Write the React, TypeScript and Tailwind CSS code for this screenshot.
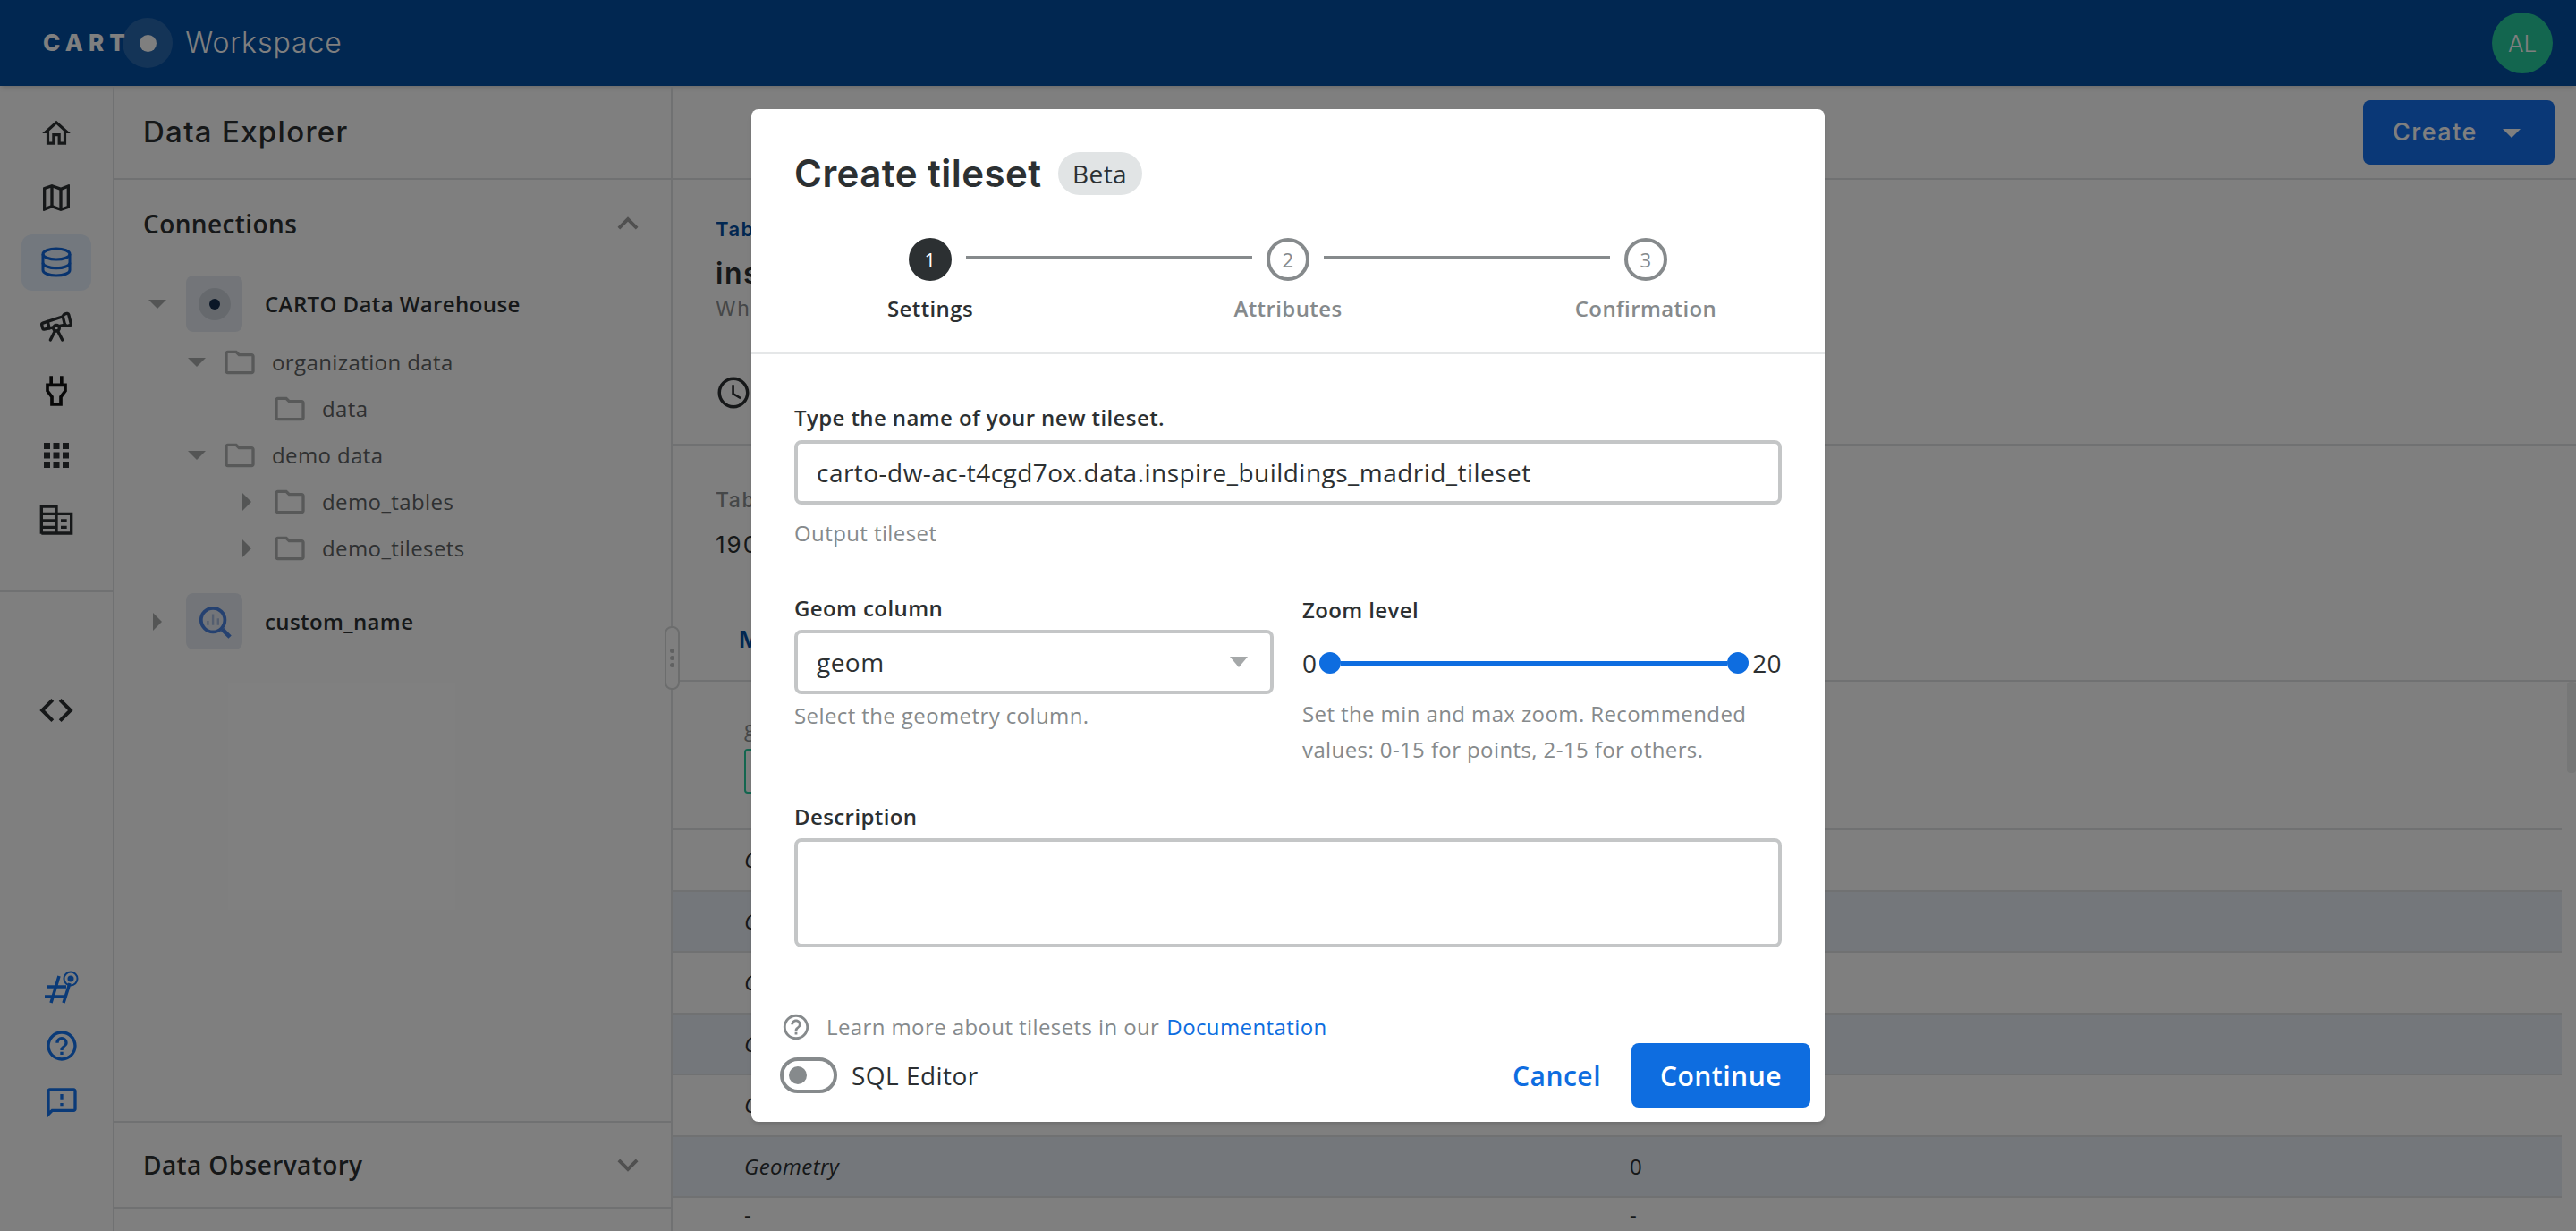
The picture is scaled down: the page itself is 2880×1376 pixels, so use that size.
import React from "react";
import { Telescope } from "lucide-react";
import {
  MdApps,
  MdExpandLess,
  MdExpandMore,
  MdHelpOutline,
  MdOutlineAccessTime,
  MdOutlineFeedback,
  MdOutlineFolder,
  MdOutlineHome,
  MdOutlineMap,
} from "react-icons/md";

const sans = "font-['Open_Sans',sans-serif] tracking-[0.4px]";
const display = "font-['Inter',sans-serif]";

const Caret = ({ open, className = "" }: { open: boolean; className?: string }) => (
  <svg viewBox="0 0 20 20" className={`h-5 w-5 shrink-0 fill-current ${className}`}>
    {open ? <path d="M0 5h20L10 15z" /> : <path d="M5 0l10 10L5 20z" />}
  </svg>
);

const DatabaseIcon = () => (
  <svg viewBox="0 0 24 24" className="h-9 w-9 fill-none stroke-[#1066dc] stroke-2">
    <ellipse cx="12" cy="6" rx="10" ry="4" />
    <path d="M2 6v12c0 2.200 4.500 4 10 4s10-1.800 10-4V6" />
    <path d="M2 12.500c0 2.200 4.500 4 10 4s10-1.800 10-4" />
  </svg>
);

const PlugIcon = () => (
  <svg viewBox="0 0 24 24" className="h-10 w-10 fill-none stroke-[#111] stroke-[2.200]">
    <path d="M8.500 2v6M15.500 2v6M6 8h12v4l-3 4v5H9v-5l-3-4z" />
  </svg>
);

const BuildingIcon = () => (
  <svg viewBox="0 0 24 24" className="h-10 w-10 fill-none stroke-[#2c3032] stroke-2">
    <path d="M2 21.500V3h10v18.500M12 8h10v13H2M2 8h10M2 12.500h10M2 17h10M15 12.500h4M15 17h4" />
  </svg>
);

const CodeIcon = () => (
  <svg viewBox="0 0 24 24" className="h-10 w-10 fill-none stroke-[#2c3032] stroke-[2.400]">
    <path d="M9.500 5l-7 7 7 7M14.500 5l7 7-7 7" />
  </svg>
);

const HashIcon = () => (
  <svg viewBox="0 0 40 40" className="h-10 w-10 fill-none stroke-[#1474f0]">
    <path strokeWidth="3.500" d="M17 6L8 36M29 14l-7 22M3 18h22M1 29h22" />
    <circle cx="30" cy="9" r="7.500" strokeWidth="2" />
    <circle cx="30" cy="9" r="3.500" className="fill-[#1474f0] stroke-none" />
  </svg>
);

const railIcons = [
  <MdOutlineHome size={38} className="text-[#2c3032]" />,
  <MdOutlineMap size={40} className="text-[#2c3032]" />,
  <DatabaseIcon />,
  <Telescope size={40} className="text-[#2c3032]" strokeWidth={2} />,
  <PlugIcon />,
  <MdApps size={42} className="text-[#2c3032]" />,
  <BuildingIcon />,
];

const Rail = () => (
  <aside className="flex h-full w-[128px] shrink-0 flex-col border-r-2 border-[#e1e3e4]">
    <div className="flex flex-col items-center pt-[17px]">
      {railIcons.map((icon, i) => (
        <div key={i} className="flex h-[72px] w-full items-center justify-center">
          <div className={`flex h-[63px] w-[78px] items-center justify-center rounded-xl ${i === 2 ? "bg-[#e7f0fc]" : ""}`}>
            {icon}
          </div>
        </div>
      ))}
    </div>
    <div className="mt-[43px] h-[2px] w-full bg-[#e1e3e4]" />
    <div className="mt-[112px] flex justify-center">
      <CodeIcon />
    </div>
    <div className="mt-auto flex flex-col items-center gap-[24px] pb-[123px] pl-[11px] text-[#1474f0]">
      <HashIcon />
      <MdHelpOutline size={40} />
      <MdOutlineFeedback size={40} />
    </div>
  </aside>
);

const TreeRow = ({ label, caret, indent }: { label: string; caret?: "open" | "closed"; indent: number }) => (
  <div className={`flex h-[52px] items-center ${indent === 1 ? "pl-[82px]" : "pl-[138px]"}`}>
    {caret ? <Caret open={caret === "open"} className="text-[#a8aaab]" /> : <span className="w-5 shrink-0" />}
    <MdOutlineFolder size={40} className="ml-[18px] shrink-0 text-[#b0b2b3]" />
    <span className="ml-4 text-[24px] text-[#5e6264]">{label}</span>
  </div>
);

const ConnectionRow = ({ label, open, children }: { label: string; open: boolean; children: React.ReactNode }) => (
  <div className="flex h-[63px] items-center pl-[38px]">
    <Caret open={open} className="text-[#a8aaab]" />
    <div className="ml-[22px] flex h-[63px] w-[63px] items-center justify-center rounded-lg bg-[#e6ebf2]">{children}</div>
    <span className="ml-[25px] text-[24px] font-semibold text-[#2c3032]">{label}</span>
  </div>
);

const Panel = () => (
  <section className={`flex h-full w-[624px] shrink-0 flex-col border-r-2 border-[#e1e3e4] ${sans}`}>
    <div className="flex h-[105px] shrink-0 items-center border-b-2 border-[#e1e3e4] pl-[32px]">
      <h2 className={`text-[33px] font-medium tracking-[1.300px] text-[#2c3032] ${display}`}>Data Explorer</h2>
    </div>
    <div className="flex h-[98px] shrink-0 items-center justify-between pl-[32px] pr-[25px]">
      <span className="text-[28px] font-semibold text-[#2c3032]">Connections</span>
      <MdExpandLess size={46} className="text-[#a0a0a0]" />
    </div>
    <div className="pt-[9px]">
      <ConnectionRow label="CARTO Data Warehouse" open>
        <span className="flex h-9 w-9 items-center justify-center rounded-full bg-[#cdd3db]">
          <span className="h-3 w-3 rounded-full bg-[#162f4f]" />
        </span>
      </ConnectionRow>
      <div className="mt-[8px]">
        <TreeRow indent={1} caret="open" label="organization data" />
        <TreeRow indent={2} label="data" />
        <TreeRow indent={1} caret="open" label="demo data" />
        <TreeRow indent={2} caret="closed" label="demo_tables" />
        <TreeRow indent={2} caret="closed" label="demo_tilesets" />
      </div>
      <div className="mt-[24px]">
        <ConnectionRow label="custom_name" open={false}>
          <svg viewBox="0 0 40 40" className="h-[38px] w-[38px] fill-none stroke-[#4b83e0]">
            <circle cx="18" cy="18" r="14" strokeWidth="4" />
            <path strokeWidth="5" d="M29 29l9 9" />
            <path strokeWidth="2.500" className="stroke-[#a9bddf]" d="M12 24v-5M18 24V11M24 24v-8" />
          </svg>
        </ConnectionRow>
      </div>
    </div>
    <div className="mb-[25px] mt-auto flex h-[98px] shrink-0 items-center justify-between border-y-2 border-[#e1e3e4] pl-[32px] pr-[25px]">
      <span className="text-[28px] font-semibold text-[#2c3032]">Data Observatory</span>
      <MdExpandMore size={46} className="text-[#a0a0a0]" />
    </div>
  </section>
);

const tableRows = [
  { name: "C", value: "", tint: false },
  { name: "C", value: "", tint: true },
  { name: "C", value: "", tint: false },
  { name: "C", value: "", tint: true },
  { name: "C", value: "", tint: false },
  { name: "Geometry", value: "0", tint: true },
];

const Main = () => (
  <main className={`flex h-full min-w-0 flex-1 flex-col ${sans}`}>
    <div className="flex h-[105px] shrink-0 items-center justify-end border-b-2 border-[#e1e3e4] pr-[24px]">
      <button className="flex h-[72px] w-[214px] items-center rounded-lg bg-[#1470ee] pl-[33px] pt-[2px] text-white">
        <span className={`text-[27px] font-medium tracking-[1.500px] ${display}`}>Create</span>
        <svg viewBox="0 0 20 10" className="ml-[28px] h-[10px] w-5 fill-current">
          <path d="M0 0h20L10 10z" />
        </svg>
      </button>
    </div>
    <div className="h-[297px] shrink-0 border-b-2 border-[#e1e3e4] pl-[48px] pt-[40px]">
      <p className={`text-[22px] font-semibold leading-[30px] tracking-[1.500px] text-[#034ea2] ${display}`}>Tab</p>
      <p className={`mt-[13px] text-[32px] font-semibold leading-[44px] tracking-[1.500px] text-[#2c3032] ${display}`}>ins</p>
      <p className={`mt-[2px] text-[23px] leading-[30px] tracking-[1.500px] text-[#8a8e90] ${display}`}>Wh</p>
      <MdOutlineAccessTime size={42} className="-ml-[1px] mt-[58px] text-[#2c3032]" />
    </div>
    <div className="h-[264px] shrink-0 border-b-2 border-[#e1e3e4] pl-[48px] pt-[46px]">
      <p className={`text-[23px] font-medium leading-[30px] tracking-[1.500px] text-[#8a8e90] ${display}`}>Tab</p>
      <p className={`mt-[17px] text-[26px] leading-[36px] tracking-[2px] text-[#2c3032] ${display}`}>190</p>
      <p className={`ml-[26px] mt-[70px] text-[26px] font-semibold leading-[36px] text-[#034ea2] ${display}`}>M</p>
    </div>
    <div className="relative min-h-0 flex-1">
      <div className="absolute right-0 top-0 h-[102px] w-[10px] rounded-sm bg-[#eceeee]" />
      <div className="mr-[16px] h-[166px] border-b-2 border-[#e1e3e4] pl-[80px] pt-[36px]">
        <p className="text-[24px] leading-[32px] text-[#8a8e90]">g</p>
        <div className="mt-[7px] h-[50px] w-[40px] rounded border-2 border-[#26cc9e]" />
      </div>
      <div className="mr-[16px]">
        {tableRows.map((row, i) => (
          <div
            key={i}
            className={`flex h-[68.500px] items-center border-b-2 border-[#e1e3e4] pl-[80px] text-[24px] italic text-[#2c3032] ${row.tint ? "bg-[#e8eef7]" : ""}`}
          >
            <span className="w-[990px]">{row.name}</span>
            <span className="not-italic">{row.value}</span>
          </div>
        ))}
        <div className="flex h-[38px] items-center pl-[80px] text-[24px] text-[#2c3032]">
          <span className="w-[990px]">-</span>
          <span>-</span>
        </div>
      </div>
    </div>
  </main>
);

const Step = ({ n, active }: { n: number; active?: boolean }) => (
  <span
    className={`flex h-12 w-12 shrink-0 items-center justify-center rounded-full text-[22px] ${
      active ? "bg-[#2c3032] text-white" : "border-4 border-[#868a8c] text-[#868a8c]"
    }`}
  >
    {n}
  </span>
);

const Connector = () => <span className="mx-4 -mt-1 h-1 w-[320px] bg-[#868a8c]" />;

const Field = ({ className, children }: { className: string; children?: React.ReactNode }) => (
  <div className={`flex items-center rounded-lg border-4 border-[#c4c6c7] pl-[21px] text-[28px] tracking-[0.47px] text-[#2c3032] ${className}`}>
    {children}
  </div>
);

const labelClass = "block text-[24px] font-semibold leading-8 text-[#2c3032]";

const Dialog = () => (
  <div className={`flex h-[1132px] w-[1200px] flex-col rounded-lg bg-white shadow-md ${sans}`}>
    <div className="flex items-center gap-[18px] pl-[48px] pt-[48px]">
      <h1 className={`text-[42px] font-semibold leading-[48px] tracking-[0.45px] text-[#2c3032] ${display}`}>Create tileset</h1>
      <span className="flex h-12 w-[94px] items-center justify-center rounded-full bg-[#e1e4e5] text-[28px] text-[#2c3032]">Beta</span>
    </div>
    <div className="mt-[48px] flex items-center justify-center">
      <Step n={1} active />
      <Connector />
      <Step n={2} />
      <Connector />
      <Step n={3} />
    </div>
    <div className="mt-[15px] grid grid-cols-3 text-center text-[24px] font-semibold leading-8 text-[#868a8c]">
      <span className="text-[#2c3032]">Settings</span>
      <span>Attributes</span>
      <span>Confirmation</span>
    </div>
    <div className="mt-[33px] h-[2px] w-full bg-[#e5e7e8]" />

    <div className="px-[48px] pt-[55px]">
      <label className={labelClass}>Type the name of your new tileset.</label>
      <Field className="mt-[9px] h-[72px]">carto-dw-ac-t4cgd7ox.data.inspire_buildings_madrid_tileset</Field>
      <p className="mt-4 text-[24px] leading-8 text-[#868a8c]">Output tileset</p>

      <div className="mt-[52px] grid grid-cols-2 gap-8">
        <div>
          <label className={labelClass}>Geom column</label>
          <Field className="mt-2 h-[72px] justify-between pr-[25px]">
            geom
            <svg viewBox="0 0 20 12" className="h-3 w-5 fill-[#a5a8a9]">
              <path d="M0 0h20L10 12z" />
            </svg>
          </Field>
          <p className="mt-2 text-[24px] leading-8 text-[#868a8c]">Select the geometry column.</p>
        </div>
        <div>
          <label className={`mt-[2px] ${labelClass}`}>Zoom level</label>
          <div className="mt-[7px] flex h-[72px] items-center text-[28px] text-[#2c3032]">
            <span>0</span>
            <span className="ml-[3px] h-6 w-6 shrink-0 rounded-full bg-[#0e6de0]" />
            <span className="h-[5px] flex-1 bg-[#0e6de0]" />
            <span className="h-6 w-6 shrink-0 rounded-full bg-[#0e6de0]" />
            <span className="ml-[4px]">20</span>
          </div>
          <p className="mt-[1px] text-[24px] leading-10 text-[#868a8c]">Set the min and max zoom. Recommended values: 0-15 for points, 2-15 for others.</p>
        </div>
      </div>

      <label className={`mt-[39px] ${labelClass}`}>Description</label>
      <Field className="mt-2 h-[122px]" />
    </div>

    <div className="mt-auto pb-4 pl-[32px] pr-4">
      <div className="flex h-8 items-center pl-[1px] text-[24px] text-[#868a8c]">
        <MdHelpOutline size={34} className="shrink-0" />
        <span className="ml-[17px]">Learn more about tilesets in our</span>
        <span className="ml-[8px] text-[#0e6de0]">Documentation</span>
      </div>
      <div className="mt-[2px] flex h-[72px] items-center justify-between">
        <div className="flex items-center">
          <span className="flex h-10 w-16 items-center rounded-full border-4 border-[#868a8c] pl-[6px]">
            <span className="h-5 w-5 rounded-full bg-[#868a8c]" />
          </span>
          <span className="ml-4 text-[28px] tracking-[0.47px] text-[#2c3032]">SQL Editor</span>
        </div>
        <div className="flex items-center gap-[34px]">
          <button className="text-[30px] font-semibold tracking-[0.5px] text-[#0e6de0]">Cancel</button>
          <button className="h-[72px] w-[200px] rounded-lg bg-[#0e6de0] text-[30px] font-semibold tracking-[0.5px] text-white">Continue</button>
        </div>
      </div>
    </div>
  </div>
);

export default function App() {
  return (
    <div className="relative h-[1376px] w-[2880px] overflow-hidden bg-white">
      <header className="flex h-[96px] items-center justify-between bg-[#034ea2] pl-[48px] pr-[26px] text-white shadow-md">
        <div className="flex items-center">
          <span className={`text-[26px] font-extrabold leading-none tracking-[6.200px] ${display}`}>CART</span>
          <span className="-ml-[9px] flex h-[56px] w-[56px] items-center justify-center rounded-full bg-white/15">
            <span className="h-[19px] w-[19px] rounded-full bg-white" />
          </span>
          <span className={`ml-[14px] text-[32px] font-light tracking-[0.95px] ${display}`}>Workspace</span>
        </div>
        <span className={`flex h-[68px] w-[68px] items-center justify-center rounded-full bg-[#26cc9e] text-[26px] font-light ${display}`}>AL</span>
      </header>
      <div className="flex h-[1280px]">
        <Rail />
        <Panel />
        <Main />
      </div>

      {/* drag handle on the panel edge */}
      <div className="absolute left-[743px] top-[700px] flex h-[71px] w-[17px] flex-col items-center justify-center gap-[3px] rounded-lg border-2 border-[#d8dadb] bg-white">
        <span className="h-[5px] w-[5px] rounded-full bg-[#c0c2c3]" />
        <span className="h-[5px] w-[5px] rounded-full bg-[#c0c2c3]" />
        <span className="h-[5px] w-[5px] rounded-full bg-[#c0c2c3]" />
      </div>

      <div className="absolute inset-0 flex items-center justify-center bg-black/50">
        <Dialog />
      </div>
    </div>
  );
}
